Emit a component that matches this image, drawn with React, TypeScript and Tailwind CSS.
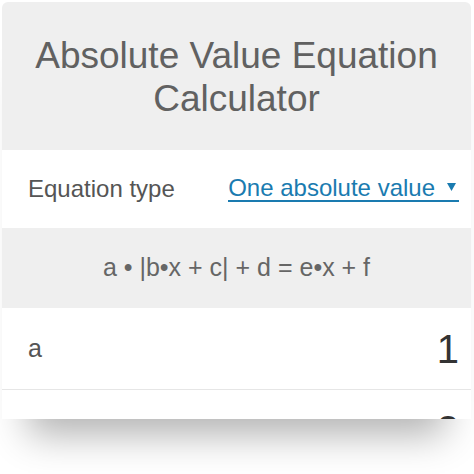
import React from "react";

export default function App() {
  return (
    <div
      className="relative w-[474px] h-[474px] overflow-hidden bg-white"
      style={{ fontFamily: '"Liberation Sans", Arial, Helvetica, sans-serif' }}
    >
      <div className="ml-[2px] mt-[2px] w-[469px] h-[417px] overflow-hidden rounded-t-[6px] bg-white flex flex-col shadow-[0_42px_36px_-26px_rgba(0,0,0,0.3)]">
        <div className="shrink-0 bg-[#efefef] pt-[32px] pb-[30px] text-center text-[37px] leading-[43px] text-[#616161]">
          <div>Absolute Value Equation</div>
          <div>Calculator</div>
        </div>

        <div className="shrink-0 h-[78px] flex items-center justify-between pl-[26px] pr-[12px]">
          <span className="text-[24px] leading-[24px] text-[#555555]">Equation type</span>
          <span className="inline-flex items-center border-b-2 border-[#1a7bb0] text-[#1a7bb0] text-[24px] leading-[24px] cursor-pointer">
            <span>One absolute value</span>
            <svg width="9" height="8" viewBox="0 0 9 8" className="ml-[12px] mr-[3px] mt-[-2px]">
              <polygon points="0,0 9,0 4.5,8" fill="#1a7bb0" />
            </svg>
          </span>
        </div>

        <div className="shrink-0 h-[80px] bg-[#efefef] flex items-center justify-center text-[25px] text-[#666666] whitespace-pre">
          a • |b•x + c| + d = e•x + f
        </div>

        <div className="shrink-0 h-[82px] border-b border-[#e6e6e6] flex items-center justify-between pl-[26px] pr-[12px]">
          <span className="text-[25px] leading-[25px] text-[#555555]">a</span>
          <span className="text-[40px] leading-[40px] text-[#333333]">1</span>
        </div>

        <div className="shrink-0 h-[80px] flex items-center justify-between pl-[26px] pr-[12px]">
          <span className="text-[25px] leading-[25px] text-[#555555]">b</span>
          <span className="text-[40px] leading-[40px] text-[#333333]">2</span>
        </div>
      </div>
    </div>
  );
}
